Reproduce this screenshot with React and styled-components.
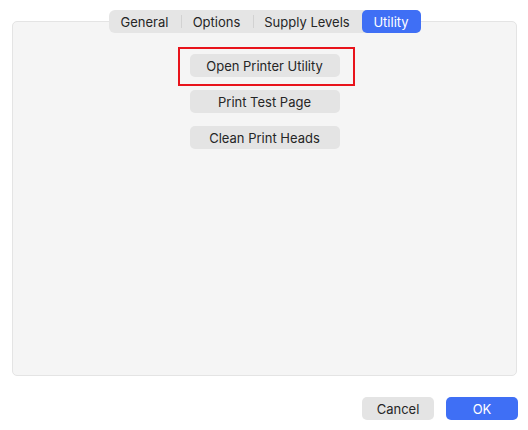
import React from 'react';
import styled, { createGlobalStyle } from 'styled-components';

const GlobalStyle = createGlobalStyle`
    html, body {
        margin : 0;
        padding : 0;
        background : #ffffff;
    }
    body {
        font-family : Inter, "Noto Sans", "Liberation Sans", sans-serif;
        font-size : 13px;
        color : #262626;
    }
`;

const Window = styled.div`
    width : 528px;
    height : 430px;
    box-sizing : border-box;
    padding : 21px 10px 0 12px;
    display : flex;
    flex-direction : column;
`;

const Panel = styled.div`
    width : 505px;
    height : 355px;
    box-sizing : border-box;
    background : #f5f5f5;
    border : 1px solid #e4e4e4;
    border-radius : 5px;
    display : flex;
    flex-direction : column;
    align-items : center;
`;

const TabBar = styled.div`
    margin-top : -12px;
    height : 23px;
    display : flex;
    align-items : center;
    background : #e5e5e5;
    border-radius : 6px;
`;

const Tab = styled.div`
    position : relative;
    height : 23px;
    width : ${props => props.w}px;
    display : flex;
    align-items : center;
    justify-content : center;
    border-radius : 5px;
    background : ${props => props.active ? '#3f6ff5' : 'transparent'};
    color : ${props => props.active ? '#ffffff' : '#262626'};
    font-size : 13px;

    &::before {
        content : '';
        display : ${props => props.divider ? 'block' : 'none'};
        position : absolute;
        left : 0;
        top : 5px;
        height : 13px;
        width : 1px;
        background : #d2d2d2;
    }
`;

const Actions = styled.div`
    margin-top : 21px;
    display : flex;
    flex-direction : column;
    gap : 13px;
`;

const Highlight = styled.div`
    position : relative;

    &::after {
        content : '';
        position : absolute;
        left : -12px;
        right : -15px;
        top : -7px;
        bottom : -9px;
        border : 2px solid #e8131b;
        pointer-events : none;
    }
`;

const Button = styled.button`
    width : ${props => props.w || 150}px;
    height : 23px;
    border : none;
    border-radius : 5px;
    padding : 0;
    font-family : inherit;
    font-size : 13px;
    background : ${props => props.primary ? '#3f6ff5' : '#e4e4e4'};
    color : ${props => props.primary ? '#ffffff' : '#262626'};
    display : flex;
    align-items : center;
    justify-content : center;
`;

const Footer = styled.div`
    margin-top : 21px;
    display : flex;
    justify-content : flex-end;
    gap : 12px;
`;

const tabs = [
    { name : "General", w : 72 },
    { name : "Options", w : 72 },
    { name : "Supply Levels", w : 109 },
    { name : "Utility", w : 59, active : true },
];

class App extends React.Component {

    render(){
        return(
            <Window>
                <GlobalStyle />
                <Panel>
                    <TabBar>
                        {tabs.map(({name, w, active}, index) => (
                            <Tab
                                key={index}
                                w={w}
                                active={active}
                                divider={index > 0 && !active}
                            >
                                {name}
                            </Tab>
                        ))}
                    </TabBar>
                    <Actions>
                        <Highlight>
                            <Button>Open Printer Utility</Button>
                        </Highlight>
                        <Button>Print Test Page</Button>
                        <Button>Clean Print Heads</Button>
                    </Actions>
                </Panel>
                <Footer>
                    <Button w={72}>Cancel</Button>
                    <Button w={72} primary>OK</Button>
                </Footer>
            </Window>
        )
    }
};

export default App;
